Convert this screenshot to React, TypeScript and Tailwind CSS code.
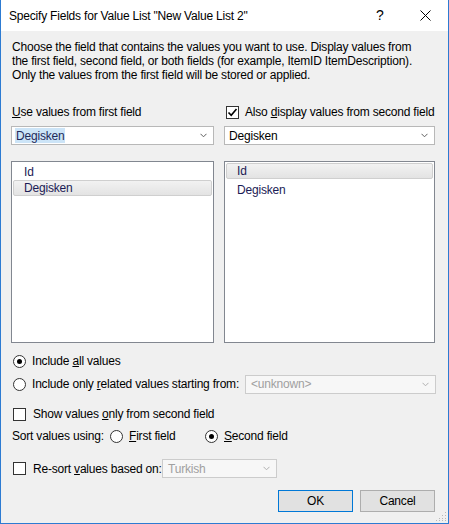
import React from "react";

const font = { fontFamily: '"Liberation Sans", Arial, sans-serif' };

function Chevron({ color = "#606060" }: { color?: string }) {
  return (
    <svg width="7" height="5" viewBox="0 0 7 5" className="shrink-0">
      <path d="M0.5 0.8 L3.5 3.8 L6.5 0.8" fill="none" stroke={color} strokeWidth="1" />
    </svg>
  );
}

function Check({ checked }: { checked?: boolean }) {
  return (
    <div className="w-[13px] h-[13px] border border-[#333333] bg-white flex items-center justify-center shrink-0">
      {checked && (
        <svg width="11" height="11" viewBox="0 0 11 11">
          <path d="M1.5 5.5 L4.2 8.3 L9.5 2" fill="none" stroke="#000" strokeWidth="1.6" />
        </svg>
      )}
    </div>
  );
}

function Radio({ checked }: { checked?: boolean }) {
  return (
    <div className="w-[13px] h-[13px] rounded-full border border-[#333333] bg-white flex items-center justify-center shrink-0">
      {checked && <div className="w-[5px] h-[5px] rounded-full bg-[#000]" />}
    </div>
  );
}

export default function App() {
  return (
    <div
      className="w-[449px] h-[524px] bg-[#f0f0f0] flex flex-col text-[12px] text-black border-x border-b border-[#2d7bd2] leading-none whitespace-nowrap tracking-[-0.2px]"
      style={font}
    >
      {/* Title bar */}
      <div className="h-[31px] bg-white flex items-center pl-[8px] shrink-0 relative">
        <span className="text-[12px] tracking-[-0.2px]">Specify Fields for Value List "New Value List 2"</span>
        <span className="absolute left-[375px] top-[8px] text-[14px]">?</span>
        <svg className="absolute left-[419px] top-[10px]" width="11" height="11" viewBox="0 0 11 11">
          <path d="M0.5 0.5 L10.5 10.5 M10.5 0.5 L0.5 10.5" stroke="#000" strokeWidth="1" />
        </svg>
      </div>

      <div className="flex flex-col pl-[10px] pr-[12px]">
        <div className="pt-[9px] pl-[1px] leading-[14px]">
          Choose the field that contains the values you want to use. Display values from
          <br />
          the first field, second field, or both fields (for example, ItemID ItemDescription).
          <br />
          Only the values from the first field will be stored or applied.
        </div>

        {/* labels */}
        <div className="flex mt-[22px] h-[16px] items-center">
          <div className="w-[203px] pl-[1px]">
            <span className="underline">U</span>se values from first field
          </div>
          <div className="ml-[12px] flex items-center gap-[6px]">
            <Check checked />
            <span>
              Also <span className="underline">d</span>isplay values from second field
            </span>
          </div>
        </div>

        {/* combos */}
        <div className="flex mt-[6px] gap-[10px]">
          <div className="w-[203px] h-[19px] bg-white border border-[#b8b8b8] flex items-center pl-[3px] pr-[6px] justify-between">
            <span className="bg-[#cce4f7] text-[#1f2a5a] px-[1px] h-[15px] flex items-center">Degisken</span>
            <Chevron />
          </div>
          <div className="w-[211px] h-[19px] bg-white border border-[#b8b8b8] flex items-center pl-[4px] pr-[6px] justify-between">
            <span>Degisken</span>
            <Chevron />
          </div>
        </div>

        {/* lists */}
        <div className="flex mt-[16px] gap-[10px]">
          <div className="w-[203px] h-[182px] bg-white border border-[#828790] p-[1px] flex flex-col text-[#1b1b55]">
            <div className="h-[17px] flex items-center pl-[11px]">Id</div>
            <div className="h-[16px] flex items-center pl-[10px] border border-[#cfcfcf] rounded-[2px] bg-gradient-to-b from-[#f2f2f2] to-[#e3e3e3]">
              Degisken
            </div>
          </div>
          <div className="w-[211px] h-[182px] bg-white border border-[#828790] p-[1px] flex flex-col text-[#1b1b55]">
            <div className="h-[16px] flex items-center pl-[10px] border border-[#cfcfcf] rounded-[2px] bg-gradient-to-b from-[#f2f2f2] to-[#e3e3e3]">
              Id
            </div>
            <div className="h-[19px] flex items-center pl-[11px] pt-[2px]">Degisken</div>
          </div>
        </div>

        {/* radio 1 */}
        <div className="flex items-center mt-[10px] h-[16px] pl-[2px] gap-[6px]">
          <Radio checked />
          <span>
            Include <span className="underline">a</span>ll values
          </span>
        </div>

        {/* radio 2 */}
        <div className="flex items-center mt-[6px] h-[18px]">
          <div className="flex items-center pl-[2px] gap-[6px] w-[234px]">
            <Radio />
            <span>
              Include only <span className="underline">r</span>elated values starting from:
            </span>
          </div>
          <div className="w-[191px] h-[19px] border border-[#cccccc] bg-[#f7f7f7] flex items-center justify-between pl-[5px] pr-[6px] text-[#a0a0a0]">
            <span>&lt;unknown&gt;</span>
            <Chevron color="#b0b0b0" />
          </div>
        </div>

        {/* checkbox */}
        <div className="flex items-center mt-[13px] h-[16px] pl-[2px] gap-[7px]">
          <Check />
          <span>
            Show values <span className="underline">o</span>nly from second field
          </span>
        </div>

        {/* sort */}
        <div className="flex items-center mt-[6px] h-[16px] pl-[1px]">
          <span className="w-[98px]">Sort values using:</span>
          <Radio />
          <span className="ml-[6px] w-[76px]">
            <span className="underline">F</span>irst field
          </span>
          <Radio checked />
          <span className="ml-[6px]">
            <span className="underline">S</span>econd field
          </span>
        </div>

        {/* resort */}
        <div className="flex items-center mt-[15px] h-[19px] pl-[2px]">
          <Check />
          <span className="ml-[7px] w-[129px]">
            Re-sort <span className="underline">v</span>alues based on:
          </span>
          <div className="w-[115px] h-[19px] border border-[#cccccc] bg-[#f7f7f7] flex items-center justify-between pl-[5px] pr-[6px] text-[#a0a0a0]">
            <span>Turkish</span>
            <Chevron color="#b0b0b0" />
          </div>
        </div>

        {/* buttons */}
        <div className="flex justify-end mt-[12px] gap-[7px] pr-[1px]">
          <button className="w-[75px] h-[22px] bg-[#e1e1e1] border border-[#0078d7] flex items-center justify-center text-[12px]" style={font}>
            OK
          </button>
          <button className="w-[75px] h-[22px] bg-[#e1e1e1] border border-[#adadad] flex items-center justify-center text-[12px]" style={font}>
            Cancel
          </button>
        </div>
      </div>

      <div className="flex-1 relative">
        <svg className="absolute right-[1px] bottom-[1px]" width="11" height="11" viewBox="0 0 11 11">
          {[
            [9, 1], [9, 4], [9, 7], [6, 4], [6, 7], [3, 7], [9, 9], [6, 9], [3, 9], [0, 9],
          ].map(([x, y], i) => (
            <rect key={i} x={x} y={y} width="1" height="1" fill="#b8b8b8" />
          ))}
        </svg>
      </div>
    </div>
  );
}
